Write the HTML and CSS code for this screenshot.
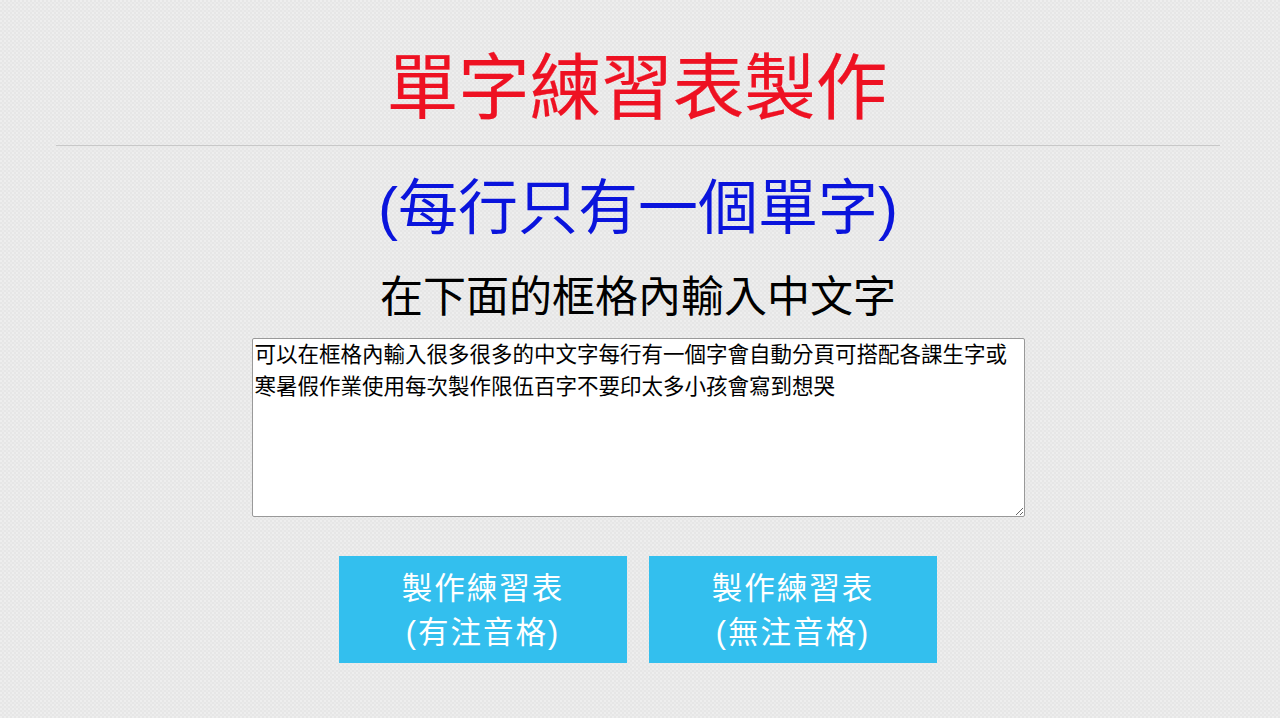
FILE: index.html
```html
<!DOCTYPE html>
<html lang="zh-Hant">
<head>
    <meta charset="UTF-8">
    <title>單字練習表製作</title>
    <link rel="stylesheet" href="styles.css">
</head>
<body>
    <h1 class="title">單字練習表製作</h1>
    <hr class="divider">
    <h2 class="subtitle">(每行只有一個單字)</h2>
    <h3 class="prompt">在下面的框格內輸入中文字</h3>
    <form class="word-form">
        <textarea class="word-input">可以在框格內輸入很多很多的中文字每行有一個字會自動分頁可搭配各課生字或寒暑假作業使用每次製作限伍百字不要印太多小孩會寫到想哭</textarea>
        <div class="buttons">
            <button type="button" class="make-button">製作練習表<br>(有注音格)</button>
            <button type="button" class="make-button">製作練習表<br>(無注音格)</button>
        </div>
    </form>
</body>
</html>
```

FILE: styles.css
```css
* {
    box-sizing: border-box;
}

html, body {
    height: 100%;
}

body {
    margin: 0;
    padding: 45px 4px 0 0;
    overflow: hidden;
    background-color: #e6e6e6;
    background-image: radial-gradient(circle at 1px 1px, rgba(255,255,255,0.3) 0 1px, transparent 1.5px),
        radial-gradient(circle at 3px 3px, rgba(255,255,255,0.22) 0 1px, transparent 1.5px);
    background-size: 4px 4px;
    font-family: "Liberation Sans", "Noto Sans CJK TC", sans-serif;
    text-align: center;
}

.title {
    margin: 0 2px 0 0;
    font-size: 71.5px;
    line-height: 86px;
    font-weight: normal;
    color: #ee1122;
    -webkit-text-stroke: 0.2px #ee1122;
}

.divider {
    margin: 14px 0 0 56px;
    width: 1164px;
    border: none;
    border-top: 1px solid #c8c8c8;
}

.subtitle {
    margin: 21px 0 0;
    font-size: 60px;
    line-height: 84px;
    font-weight: normal;
    color: #0a14dc;
}

.prompt {
    margin: 16px 0 0;
    font-size: 43px;
    line-height: 60px;
    font-weight: normal;
    color: #000;
}

.word-form {
    display: flex;
    flex-direction: column;
    align-items: center;
    margin-top: 11px;
}

.word-input {
    display: block;
    width: 773px;
    height: 179px;
    padding: 0 2px;
    border: 1px solid #999;
    border-radius: 2px;
    background: #fff;
    color: #000;
    font-family: inherit;
    font-size: 21.5px;
    line-height: 32px;
}

.buttons {
    display: flex;
    gap: 22px;
    margin-top: 39px;
}

.make-button {
    width: 288px;
    height: 107px;
    padding: 0;
    border: none;
    background-color: #33bfee;
    color: #fff;
    font-family: inherit;
    font-size: 30.5px;
    line-height: 44px;
    letter-spacing: 2px;
}
```
